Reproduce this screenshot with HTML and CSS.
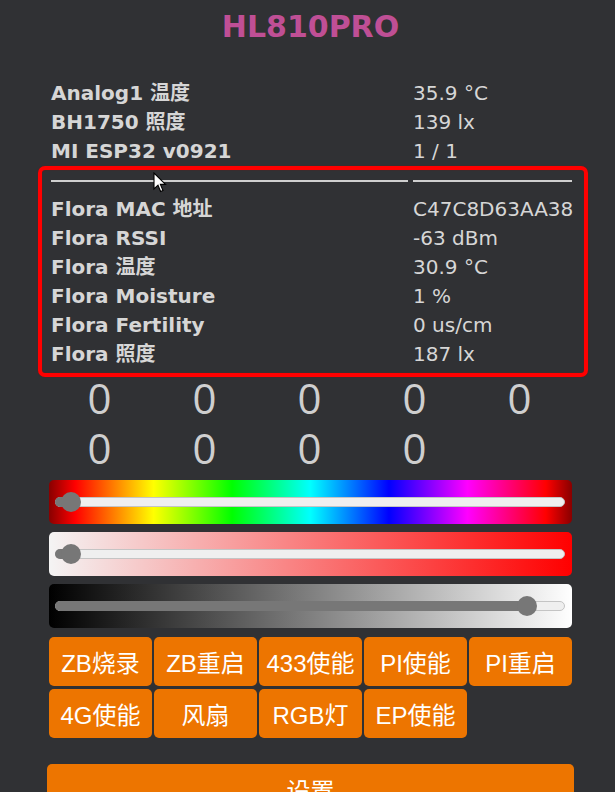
FILE: index.html
```html
<!DOCTYPE html>
<html lang="zh">
<head>
<meta charset="utf-8">
<title>HL810PRO</title>
<link rel="stylesheet" href="styles.css">
</head>
<body>
<div class="page">
  <h1 class="title">HL810PRO</h1>

  <div class="sensors">
    <div class="row"><span class="lbl">Analog1 温度</span><span class="val">35.9 °C</span></div>
    <div class="row"><span class="lbl">BH1750 照度</span><span class="val">139 lx</span></div>
    <div class="row"><span class="lbl">MI ESP32 v0921</span><span class="val">1 / 1</span></div>
  </div>

  <div class="sensors flora">
    <div class="row sep"><span class="line line-l"></span><span class="line line-r"></span></div>
    <div class="row"><span class="lbl">Flora MAC 地址</span><span class="val">C47C8D63AA38</span></div>
    <div class="row"><span class="lbl">Flora RSSI</span><span class="val">-63 dBm</span></div>
    <div class="row"><span class="lbl">Flora 温度</span><span class="val">30.9 °C</span></div>
    <div class="row"><span class="lbl">Flora Moisture</span><span class="val">1 %</span></div>
    <div class="row"><span class="lbl">Flora Fertility</span><span class="val">0 us/cm</span></div>
    <div class="row"><span class="lbl">Flora 照度</span><span class="val">187 lx</span></div>
  </div>

  <div class="zeros">
    <span>0</span><span>0</span><span>0</span><span>0</span><span>0</span>
    <span>0</span><span>0</span><span>0</span><span>0</span>
  </div>

  <div class="bar bar-hue">
    <div class="track"><div class="fill" style="width:15px"></div><div class="thumb" style="left:15px"></div></div>
  </div>
  <div class="bar bar-sat">
    <div class="track"><div class="fill" style="width:15px"></div><div class="thumb" style="left:15px"></div></div>
  </div>
  <div class="bar bar-dim">
    <div class="track"><div class="fill" style="width:471px"></div><div class="thumb" style="left:471px"></div></div>
  </div>

  <div class="buttons">
    <button class="btn">ZB烧录</button>
    <button class="btn">ZB重启</button>
    <button class="btn">433使能</button>
    <button class="btn">PI使能</button>
    <button class="btn">PI重启</button>
    <button class="btn">4G使能</button>
    <button class="btn">风扇</button>
    <button class="btn">RGB灯</button>
    <button class="btn">EP使能</button>
  </div>

  <button class="btn btn-wide">设置</button>
</div>

<svg class="cursor" width="14" height="22" viewBox="0 0 14 22">
  <path d="M1 1 L1 17 L5 13.2 L7.6 19.5 L10 18.5 L7.4 12.4 L12.5 12.4 Z" fill="#fff" stroke="#000" stroke-width="1.1" stroke-linejoin="miter"/>
</svg>
</body>
</html>
```

FILE: styles.css
```css
html, body {
  margin: 0;
  padding: 0;
  background: #303134;
  height: 100%;
  overflow: hidden;
}

body {
  color: #d6d6d6;
  font-family: "DejaVu Sans", "Noto Sans CJK SC", sans-serif;
  position: relative;
}

.page {
  width: 527px;
  margin-left: 47px;
}

.title {
  margin: 9px 0 0;
  height: 36px;
  line-height: 36px;
  font-size: 30px;
  font-weight: bold;
  text-align: center;
  color: #bf4f95;
}

.sensors {
  margin-top: 34px;
  padding-left: 4px;
}

.row {
  display: grid;
  grid-template-columns: 362px 1fr;
  height: 29px;
  line-height: 29px;
  font-size: 20px;
  white-space: nowrap;
}

.lbl {
  font-weight: bold;
}

.flora {
  margin-top: 0;
  position: relative;
  padding-bottom: 8px;
}

.flora::after {
  content: "";
  position: absolute;
  left: -9px;
  right: -14px;
  top: 0;
  bottom: 0;
  border: 4px solid #f00;
  border-radius: 7px;
  box-sizing: border-box;
  box-shadow: 0 0 1px #900, inset 0 0 1px #900;
}

.sep {
  align-items: center;
}

.line {
  display: block;
  height: 2px;
  background: #cfcfcf;
  margin-top: 1px;
}

.line-l {
  width: 357px;
}

.line-r {
  width: 159px;
}

.zeros {
  display: grid;
  grid-template-columns: repeat(5, 105px);
  grid-auto-rows: 50px;
  margin-top: -4px;
  font-family: "Open Sans", sans-serif;
  font-size: 42px;
  line-height: 50px;
  color: #cfcfcf;
  text-align: center;
}

.zeros span {
  display: block;
  height: 50px;
}

.bar {
  margin: 7px 2px 0;
  height: 44px;
  border-radius: 5px;
  display: flex;
  align-items: center;
  padding: 0 7px 0 6px;
}

.bar + .bar {
  margin-top: 8px;
}

.bar-hue {
  background: linear-gradient(to right, #800, #f00 5%, #ff0 20%, #0f0 35%, #0ff 50%, #00f 65%, #f0f 80%, #f00 95%, #800);
}

.bar-sat {
  background: linear-gradient(to right, #f4f4f4, #f00);
}

.bar-dim {
  background: linear-gradient(to right, #000, #fff);
}

.track {
  position: relative;
  flex: 1;
  height: 10px;
  box-sizing: border-box;
  background: #efefef;
  border: 1px solid #c4c4c4;
  border-radius: 5px;
}

.fill {
  position: absolute;
  left: -1px;
  top: -1px;
  bottom: -1px;
  background: #777;
  border-radius: 5px 0 0 5px;
}

.thumb {
  position: absolute;
  top: 50%;
  width: 20px;
  height: 20px;
  margin: -10px 0 0 -10px;
  border-radius: 50%;
  background: #777;
}

.buttons {
  display: grid;
  grid-template-columns: repeat(5, 1fr);
  column-gap: 2px;
  row-gap: 3px;
  margin: 9px 2px 0;
}

.btn {
  display: block;
  height: 49px;
  padding: 0;
  border: 0;
  border-radius: 5px;
  background: #ed7500;
  color: #fff;
  font-family: "Liberation Sans", "Noto Sans CJK SC", sans-serif;
  font-size: 24px;
  text-align: center;
  white-space: nowrap;
}

.btn-wide {
  width: 100%;
  height: 50px;
  margin-top: 26px;
}

.cursor {
  position: absolute;
  left: 153px;
  top: 172px;
}
```
